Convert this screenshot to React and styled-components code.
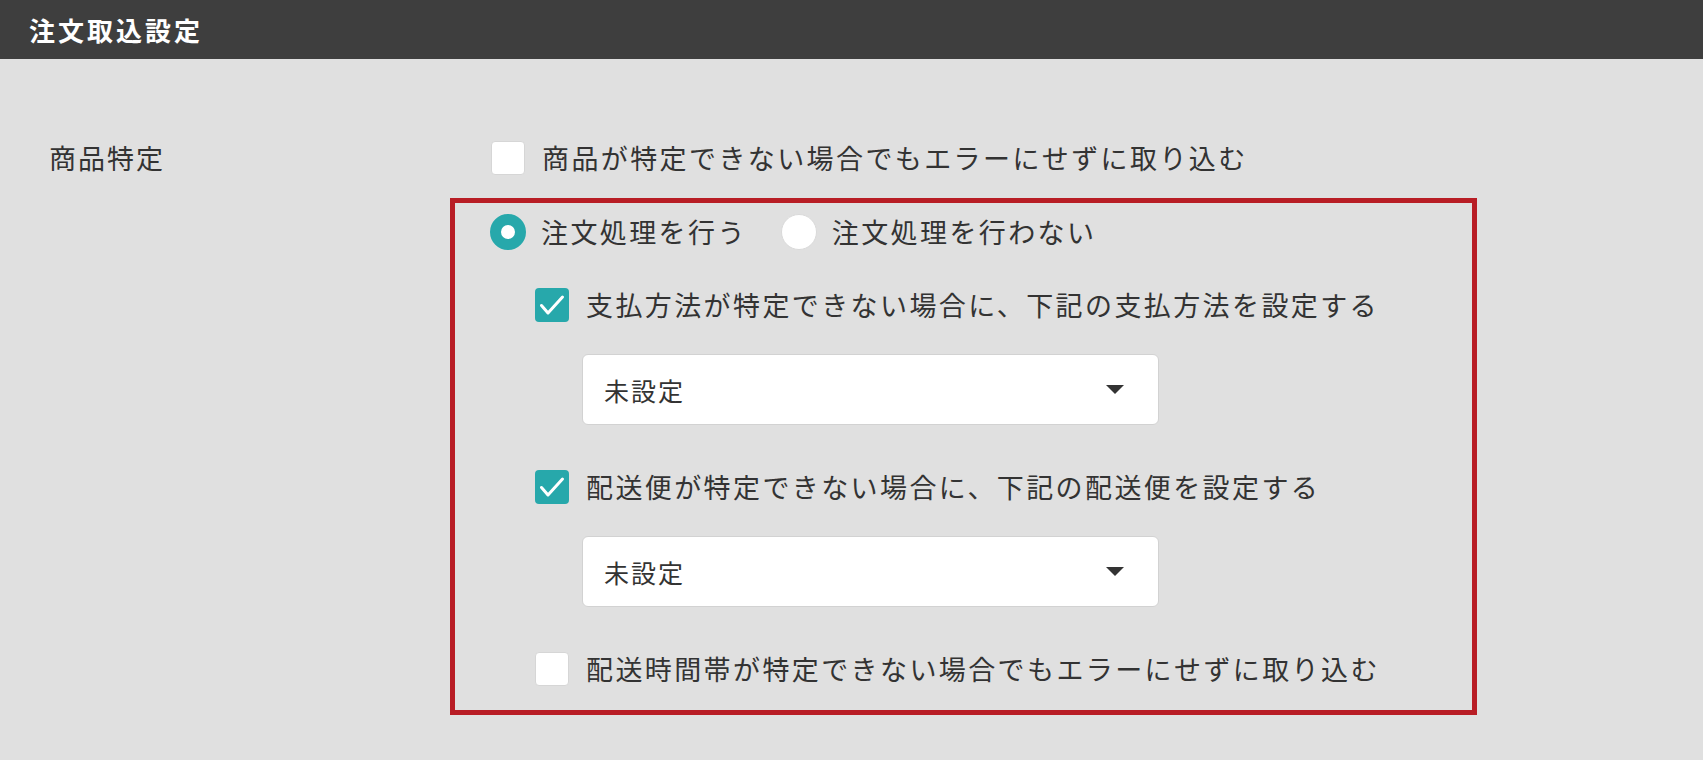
import React, { useState } from "react";
import styled, { createGlobalStyle } from "styled-components";

const GlobalStyle = createGlobalStyle`
  html, body {
    margin: 0;
    padding: 0;
    background: #e0e0e0;
  }
  body {
    font-family: "Noto Sans CJK JP", "Noto Sans", sans-serif;
    color: #333;
  }
`;

const App = () => {
  const [mode, setMode] = useState("process");
  const [payment, setPayment] = useState(true);
  const [delivery, setDelivery] = useState(true);
  const [ignoreItem, setIgnoreItem] = useState(false);
  const [ignoreTime, setIgnoreTime] = useState(false);

  return (
    <Page>
      <GlobalStyle />
      <Header>注文取込設定</Header>
      <Content>
        <FormRow>
          <Label>商品特定</Label>
          <Controls>
            <TopOption>
              <Check checked={ignoreItem} label="商品が特定できない場合でもエラーにせずに取り込む" onToggle={() => setIgnoreItem(!ignoreItem)} />
            </TopOption>
            <Highlight>
              <RadioGroup>
                <Radio checked={mode === "process"} label="注文処理を行う" onSelect={() => setMode("process")} />
                <Radio checked={mode === "skip"} label="注文処理を行わない" onSelect={() => setMode("skip")} />
              </RadioGroup>
              <Nested>
                <Check checked={payment} label="支払方法が特定できない場合に、下記の支払方法を設定する" onToggle={() => setPayment(!payment)} />
                <Select>
                  <span>未設定</span>
                  <Caret />
                </Select>
                <Check checked={delivery} label="配送便が特定できない場合に、下記の配送便を設定する" onToggle={() => setDelivery(!delivery)} />
                <Select>
                  <span>未設定</span>
                  <Caret />
                </Select>
                <Check checked={ignoreTime} label="配送時間帯が特定できない場合でもエラーにせずに取り込む" onToggle={() => setIgnoreTime(!ignoreTime)} />
              </Nested>
            </Highlight>
          </Controls>
        </FormRow>
      </Content>
    </Page>
  );
};

const Check = ({ checked, label, onToggle }) => (
  <Option onClick={onToggle}>
    <Box checked={checked}>
      {checked && (
        <svg width="34" height="34" viewBox="0 0 34 34">
          <path d="M6.5 17.5 L13 25 L27.5 9" fill="none" stroke="#fff" strokeWidth="3" strokeLinecap="round" strokeLinejoin="round" />
        </svg>
      )}
    </Box>
    <OptionText>{label}</OptionText>
  </Option>
);

const Radio = ({ checked, label, onSelect }) => (
  <RadioOption onClick={onSelect}>
    <Circle checked={checked} />
    <OptionText>{label}</OptionText>
  </RadioOption>
);

const Page = styled.div`
  min-height: 760px;
  background: #e0e0e0;
`;

const Header = styled.header`
  height: 59px;
  background: #3e3e3e;
  color: #fff;
  font-size: 26px;
  font-weight: 700;
  letter-spacing: 3px;
  line-height: 59px;
  padding-left: 29px;
`;

const Content = styled.main`
  padding: 79px 0 0 49px;
`;

const FormRow = styled.div`
  display: flex;
  align-items: flex-start;
`;

const Label = styled.div`
  width: 401px;
  flex-shrink: 0;
  font-size: 27px;
  letter-spacing: 2px;
  line-height: 40px;
  color: #333;
`;

const Controls = styled.div`
  display: flex;
  flex-direction: column;
  gap: 20px;
`;

const TopOption = styled.div`
  padding-left: 41px;
`;

const Highlight = styled.section`
  width: 1027px;
  box-sizing: border-box;
  border: 5px solid #b81d25;
  padding: 9px 0 21px 35px;
  display: flex;
  flex-direction: column;
  gap: 33px;
`;

const RadioGroup = styled.div`
  display: flex;
  align-items: center;
  gap: 34px;
`;

const Nested = styled.div`
  padding-left: 45px;
  display: flex;
  flex-direction: column;
  align-items: flex-start;
  gap: 29px;

  & > :nth-child(3), & > :nth-child(5) {
    margin-top: 13px;
  }
`;

const Option = styled.label`
  display: flex;
  align-items: center;
  gap: 17px;
  height: 40px;
  cursor: pointer;
`;

const RadioOption = styled(Option)`
  gap: 15px;
`;

const OptionText = styled.span`
  font-size: 27px;
  letter-spacing: 2.4px;
  line-height: 40px;
  color: #333;
  white-space: nowrap;
`;

const Box = styled.span`
  width: 34px;
  height: 34px;
  box-sizing: border-box;
  border-radius: 4px;
  display: flex;
  align-items: center;
  justify-content: center;
  overflow: hidden;
  background: ${(p) => (p.checked ? "#27a8ab" : "#fff")};
  border: ${(p) => (p.checked ? "none" : "1px solid #d6d6d6")};
`;

const Circle = styled.span`
  width: 36px;
  height: 36px;
  box-sizing: border-box;
  border-radius: 50%;
  background: #fff;
  border: ${(p) => (p.checked ? "11px solid #27a8ab" : "1px solid #dadada")};
`;

const Select = styled.div`
  width: 577px;
  height: 71px;
  box-sizing: border-box;
  margin-left: 47px;
  background: #fff;
  border: 1px solid #d2d2d2;
  border-radius: 6px;
  display: flex;
  align-items: center;
  justify-content: space-between;
  padding: 0 34px 0 21px;
  font-size: 25px;
  letter-spacing: 2px;
  color: #333;
  cursor: pointer;
`;

const Caret = styled.span`
  width: 0;
  height: 0;
  border-left: 9px solid transparent;
  border-right: 9px solid transparent;
  border-top: 9px solid #333;
`;

export default App;
